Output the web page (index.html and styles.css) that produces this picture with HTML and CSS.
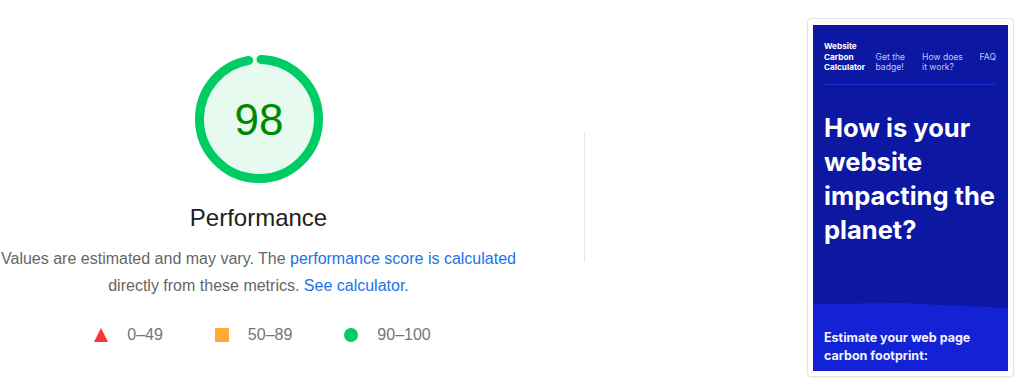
FILE: index.html
```html
<!DOCTYPE html>
<html lang="en">
<head>
<meta charset="utf-8">
<title>Performance</title>
<link rel="stylesheet" href="styles.css">
</head>
<body>
<main class="page">
  <section class="summary">
    <svg class="gauge" width="128" height="128" viewBox="0 0 128 128" aria-label="Performance score 98">
      <circle class="gauge-base" cx="64" cy="64" r="59.5"></circle>
      <circle class="gauge-arc" cx="64" cy="64" r="59.5" stroke-dasharray="360.8 400" transform="rotate(-88.07 64 64)"></circle>
      <text class="gauge-score" x="64" y="80" text-anchor="middle">98</text>
    </svg>
    <h1 class="title">Performance</h1>
    <p class="desc">Values are estimated and may vary. The <a href="#">performance score is calculated</a> directly from these metrics. <a href="#">See calculator.</a></p>
    <ul class="legend">
      <li class="legend-item"><span class="ico tri"></span><span>0–49</span></li>
      <li class="legend-item"><span class="ico sq"></span><span>50–89</span></li>
      <li class="legend-item"><span class="ico dot"></span><span>90–100</span></li>
    </ul>
  </section>
  <div class="divider"></div>
  <aside class="thumb">
    <div class="shot">
      <div class="shot-top">
        <nav class="nav">
          <div class="logo">Website<br>Carbon<br>Calculator</div>
          <div class="nav-link l1">Get the<br>badge!</div>
          <div class="nav-link l2">How does<br>it work?</div>
          <div class="nav-link l3">FAQ</div>
        </nav>
        <div class="rule"></div>
        <h2 class="headline">How is your website impacting the planet?</h2>
      </div>
      <div class="shot-bottom">
        <p class="estimate">Estimate your web page carbon footprint:</p>
      </div>
    </div>
  </aside>
</main>
</body>
</html>
```
FILE: styles.css
```css
html, body {
  margin: 0;
  padding: 0;
  background: #fff;
}
body {
  width: 1024px;
  height: 386px;
  overflow: hidden;
  font-family: "Liberation Sans", Arial, sans-serif;
}
.page {
  display: flex;
  align-items: flex-start;
}
.summary {
  width: 517px;
  display: flex;
  flex-direction: column;
  align-items: center;
  padding-top: 55px;
}
.gauge {
  display: block;
}
.gauge-base {
  fill: #e6faef;
  stroke: none;
}
.gauge-arc {
  fill: none;
  stroke: #00cc66;
  stroke-width: 9;
  stroke-linecap: round;
}
.gauge-score {
  font-family: "Liberation Sans", Arial, sans-serif;
  font-size: 44px;
  fill: #008800;
}
.title {
  margin: 21px 0 0;
  font-size: 24px;
  line-height: 28px;
  font-weight: normal;
  color: #212121;
}
.desc {
  margin: 12.5px 0 0;
  width: 530px;
  flex: none;
  text-align: center;
  font-size: 16px;
  line-height: 27px;
  color: #666666;
}
.desc a {
  color: #1a73e8;
  text-decoration: none;
}
.legend {
  list-style: none;
  margin: 26px 0 0;
  padding: 0 0 0 8px;
  display: flex;
  gap: 52px;
  font-size: 16px;
  line-height: 20px;
  color: #757575;
}
.legend-item {
  display: flex;
  align-items: center;
  gap: 19px;
}
.ico {
  width: 14px;
  height: 14px;
  display: block;
}
.tri {
  width: 0;
  height: 0;
  border-left: 7px solid transparent;
  border-right: 7px solid transparent;
  border-bottom: 14px solid #ff3333;
}
.sq {
  background: #ffaa33;
}
.dot {
  background: #00cc66;
  border-radius: 50%;
}
.divider {
  width: 1px;
  height: 129px;
  margin: 133px 0 0 67px;
  background: #e6e6e6;
}
.thumb {
  margin: 18px 0 0 222px;
  width: 195px;
  height: 346px;
  padding: 6px 5px 5px 5px;
  border: 1px solid #e3e3e3;
  border-radius: 4px;
  box-shadow: 0 1px 2px rgba(0,0,0,0.06);
}
.shot {
  width: 195px;
  height: 346px;
  background: #0c17a2;
  display: flex;
  flex-direction: column;
  overflow: hidden;
  font-family: Inter, "Liberation Sans", sans-serif;
}
.shot-top {
  box-sizing: border-box;
  height: 278px;
  flex: none;
  padding: 16px 12px 0 11px;
}
.nav {
  display: flex;
  align-items: flex-start;
  font-size: 8.2px;
  line-height: 10.5px;
}
.logo {
  color: #fff;
  font-weight: 700;
  width: 52px;
}
.nav-link {
  color: #c3c8f0;
  font-size: 8.6px;
  padding-top: 10.5px;
}
.l1 { width: 47px; }
.l2 { width: 58px; }
.rule {
  height: 1px;
  margin-top: 11px;
  background: #1c2bd6;
}
.headline {
  margin: 26px 0 0;
  color: #fff;
  font-size: 25.5px;
  line-height: 34px;
  font-weight: 700;
}
.shot-bottom {
  flex: 1;
  background: #1322d4;
  clip-path: polygon(0 1px, 45% 0, 100% 5px, 100% 100%, 0 100%);
  padding: 0 11px;
}
.estimate {
  margin: 26px 0 0;
  color: #f2f3fc;
  font-size: 12.5px;
  line-height: 18px;
  font-weight: 700;
}
```
